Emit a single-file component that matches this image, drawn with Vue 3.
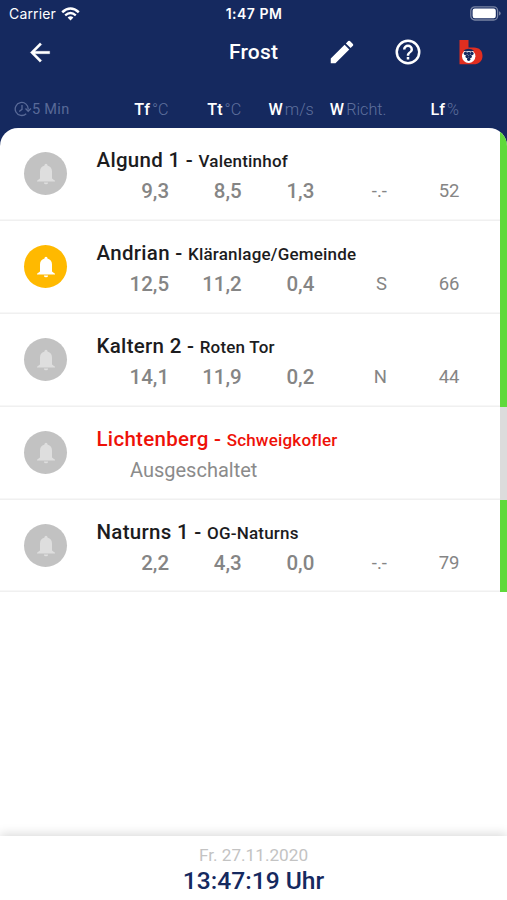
<script setup>
const columns = [
  { name: 'Tf', unit: '°C' },
  { name: 'Tt', unit: '°C' },
  { name: 'W', unit: 'm/s' },
  { name: 'W', unit: 'Richt.' },
  { name: 'Lf', unit: '%' }
]

const stations = [
  { name: 'Algund 1', place: 'Valentinhof', values: ['9,3', '8,5', '1,3', '-.-', '52'] },
  { name: 'Andrian', place: 'Kläranlage/Gemeinde', values: ['12,5', '11,2', '0,4', 'S', '66'], alarm: true },
  { name: 'Kaltern 2', place: 'Roten Tor', values: ['14,1', '11,9', '0,2', 'N', '44'] },
  { name: 'Lichtenberg', place: 'Schweigkofler', values: [], off: true },
  { name: 'Naturns 1', place: 'OG-Naturns', values: ['2,2', '4,3', '0,0', '-.-', '79'] }
]
</script>

<template>
  <div class="screen">
    <header class="top">
      <div class="status">
        <div class="carrier">
          <span>Carrier</span>
          <svg width="19" height="14" viewBox="0 0 19 14" fill="none" stroke="#fff">
            <path d="M1.2 5.2Q9.5-2.2 17.8 5.2" stroke-width="2.5" />
            <path d="M4.2 8.4Q9.5 3.7 14.8 8.4" stroke-width="2.3" />
            <path d="M6.6 10.6Q9.5 8 12.4 10.6L9.5 13.6Z" fill="#fff" stroke="none" />
          </svg>
        </div>
        <span class="clock">1:47 PM</span>
        <svg class="battery" width="31" height="15" viewBox="0 0 31 15">
          <rect x="0.8" y="0.8" width="26.8" height="13.2" rx="4" fill="none" stroke="#7884a4" stroke-width="1.3" />
          <rect x="2.6" y="2.6" width="23.2" height="9.6" rx="2.2" fill="#fff" />
          <path d="M29 5.2q1.7 .6 1.7 2.2t-1.7 2.2z" fill="#7884a4" />
        </svg>
      </div>

      <nav class="bar">
        <svg class="back" width="30" height="29" viewBox="0 0 24 24" fill="#fff">
          <path d="M20 11H7.83l5.59-5.59L12 4l-8 8 8 8 1.41-1.41L7.83 13H20z" stroke="#fff" stroke-width="0.3" />
        </svg>
        <h1>Frost</h1>
        <svg class="edit" width="30" height="30" viewBox="0 0 24 24" fill="#fff">
          <path d="M3 17.25V21h3.75L17.81 9.94l-3.75-3.75zM20.71 7.04a1 1 0 0 0 0-1.41l-2.34-2.34a1 1 0 0 0-1.41 0l-1.83 1.83 3.75 3.75z" />
        </svg>
        <svg class="help" width="30" height="30" viewBox="0 0 24 24" fill="#fff">
          <path d="M11 18h2v-2h-2zm1-16a10 10 0 1 0 0 20 10 10 0 0 0 0-20m0 18a8 8 0 1 1 0-16 8 8 0 0 1 0 16m0-14a4 4 0 0 0-4 4h2a2 2 0 1 1 4 0c0 2-3 1.75-3 5h2c0-2.25 3-2.5 3-5a4 4 0 0 0-4-4" />
        </svg>
        <svg class="logo" width="24" height="25" viewBox="0 0 24 25">
          <path d="M0.500 0H9.500V7.500H15C20.500 7.500 23.500 11 23.500 16S20 24.300 14.500 24.300H0.500Z" fill="#e12e20" />
          <circle cx="9.700" cy="16.200" r="6.700" fill="#fff" />
          <path d="M4.300 10.500Q9.500 7.200 15.100 10.500L12.300 11.600 9.700 10.900 7 11.600Z" fill="#15295f" />
          <g fill="#15295f">
            <circle cx="6.500" cy="13.500" r="1.750" /><circle cx="9.700" cy="13.500" r="1.750" /><circle cx="12.900" cy="13.500" r="1.750" />
            <circle cx="8.200" cy="16.400" r="1.750" /><circle cx="11.200" cy="16.400" r="1.750" /><circle cx="9.700" cy="19.300" r="1.700" />
          </g>
        </svg>
      </nav>

      <div class="heads">
        <div class="interval">
          <svg width="18" height="16" viewBox="0 0 18 16" fill="none" stroke="#596a98" stroke-width="1.3">
            <path d="M12.2 12.7A6.500 6.500 0 1 1 14.200 8.500M11.500 7.500l2.700 2.800 2.700-2.800M8 4v4.300L5.200 10.400" />
          </svg>
          <span>5 Min</span>
        </div>
        <div class="grid">
          <span v-for="(c, i) in columns" :key="i"><b>{{ c.name }}</b><i>{{ c.unit }}</i></span>
        </div>
      </div>
    </header>

    <main class="list">
      <article v-for="s in stations" :key="s.name" class="row" :class="{ off: s.off }">
        <div class="bell" :class="{ active: s.alarm }">
          <svg width="26" height="26" viewBox="0 0 26 26">
            <path d="M13 2.800a1.500 1.500 0 0 1 1.500 1.600C17.700 5.300 19 7.600 19 10.500V17.500L22 19.700V20.600H4V19.700L7 17.500V10.500C7 7.600 8.300 5.300 11.500 4.400A1.500 1.500 0 0 1 13 2.800M10.900 21.400h4.200a2.100 1.900 0 0 1-4.200 0" />
          </svg>
        </div>
        <div class="info">
          <h2>{{ s.name }} - <small>{{ s.place }}</small></h2>
          <p v-if="s.off">Ausgeschaltet</p>
          <div v-else class="grid values">
            <span v-for="(v, i) in s.values" :key="i">{{ v }}</span>
          </div>
        </div>
        <div class="level"></div>
      </article>
    </main>

    <footer>
      <span class="date">Fr. 27.11.2020</span>
      <strong>13:47:19 Uhr</strong>
    </footer>
  </div>
</template>

<style>
body {
  margin: 0;
}
</style>

<style scoped>
.screen {
  height: 900px;
  display: flex;
  flex-direction: column;
  overflow: hidden;
  background: #fff;
  font-family: Roboto, sans-serif;
}

.top {
  box-sizing: border-box;
  height: 148px;
  flex: none;
  background: #15295f;
  color: #fff;
}

.status {
  display: grid;
  grid-template-columns: 1fr auto 1fr;
  height: 27px;
  align-items: center;
  padding: 0 6px 0 9px;
  font-family: Inter, sans-serif;
  font-size: 14px;
  line-height: 20px;
}

.carrier {
  display: flex;
  align-items: center;
  gap: 5px;
}

.carrier span {
  letter-spacing: 0.15px;
}

.clock {
  font-weight: 600;
  font-size: 14px;
  letter-spacing: 0.5px;
  margin-right: 2px;
}

.battery {
  justify-self: end;
}

.bar {
  height: 50px;
  display: grid;
  grid-template-columns: 25px 204px 101px 66px 63px 24px;
  align-items: center;
}

.bar .back {
  grid-column: 2;
}

.bar h1 {
  margin: 0;
  font-size: 21px;
  font-weight: 500;
  line-height: 28px;
  letter-spacing: 0.2px;
}

.bar .edit,
.bar .help {
  margin-left: -3px;
}

.heads {
  display: flex;
  height: 24px;
  margin-top: 20px;
}

.interval {
  box-sizing: border-box;
  width: 96px;
  padding-left: 14px;
  display: flex;
  align-items: center;
  color: #596a98;
  font-size: 14.5px;
  letter-spacing: 0.3px;
}

.grid {
  display: grid;
  grid-template-columns: repeat(5, 72.6px);
  text-align: right;
}

.heads .grid span {
  display: flex;
  justify-content: flex-end;
  align-items: center;
  gap: 2px;
  font-size: 16.2px;
}

.heads b {
  font-weight: 500;
}

.heads i {
  font-style: normal;
  font-weight: 300;
  color: #5f709d;
}

.list {
  height: 464px;
  flex: none;
  margin-top: -20px;
  overflow: hidden;
  border-radius: 18px 18px 0 0;
  background: #fff;
  display: grid;
  grid-template-rows: repeat(4, 93px) 92px;
}

.row {
  display: grid;
  grid-template-columns: 96.5px 1fr 7px;
  box-shadow: inset 0 -1.5px #f0f0f0;
}

.bell {
  margin: 24px 0 0 24px;
  width: 43px;
  height: 43px;
  border-radius: 50%;
  background: #c2c2c2;
  display: flex;
  align-items: center;
  justify-content: center;
}

.bell svg {
  fill: #dedede;
}

.bell.active {
  background: #ffb900;
}

.bell.active svg {
  fill: #fff;
}

.info {
  padding-top: 18px;
}

h2 {
  margin: 0;
  color: #1c1c1e;
  font-size: 20.5px;
  line-height: 28px;
  font-weight: 500;
  letter-spacing: 0.3px;
  white-space: nowrap;
}

h2 small {
  font-size: 17px;
  letter-spacing: 0.2px;
}

.off h2 {
  color: #ee1108;
}

.values {
  margin-top: 2px;
  color: #858585;
  font-size: 20.5px;
  line-height: 28px;
  font-weight: 500;
}

.values span:nth-child(n + 4) {
  font-size: 18.5px;
  font-weight: 400;
}

.info p {
  margin: 2px 0 0 33.5px;
  color: #8b8b8b;
  font-size: 20px;
  line-height: 28px;
}

.level {
  background: #5fd93b;
}

.off .level {
  background: #dcdcdc;
}

footer {
  height: 64px;
  flex: none;
  margin-top: auto;
  display: flex;
  flex-direction: column;
  align-items: center;
  background: #fff;
  box-shadow: 0 -2px 10px rgba(0, 0, 0, 0.15);
}

.date {
  margin-top: 8px;
  color: #c3c3c3;
  font-size: 17.2px;
  line-height: 22px;
}

footer strong {
  margin-top: 1px;
  color: #15295f;
  font-size: 24.6px;
  line-height: 28px;
  font-weight: 500;
}
</style>
